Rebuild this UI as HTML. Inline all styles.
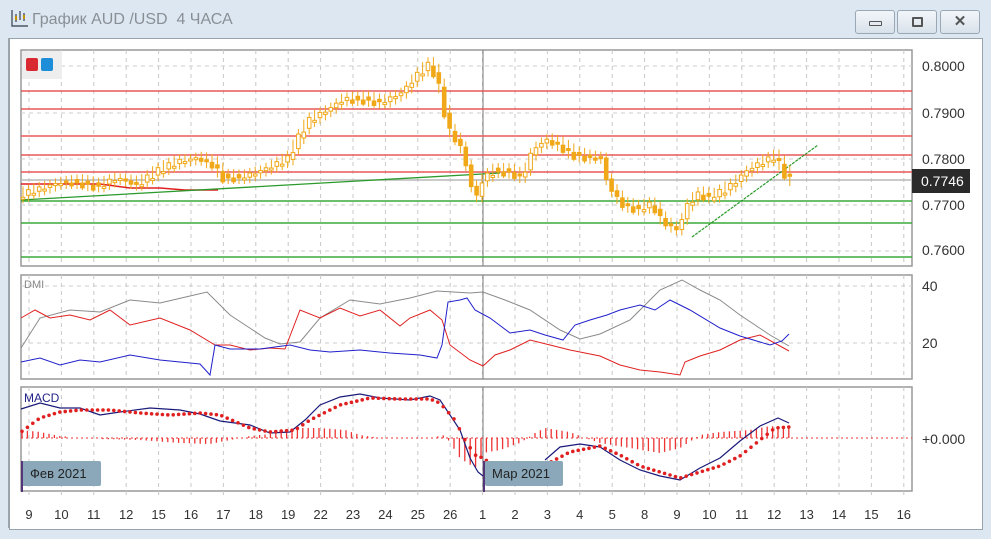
<!DOCTYPE html>
<html><head><meta charset="utf-8"><style>
body{margin:0;width:991px;height:539px;background:#dce7f1;overflow:hidden;font-family:"Liberation Sans",sans-serif;position:relative}
.title{position:absolute;left:32px;top:11px;font-size:16px;color:#8a8f96;z-index:3}
.btn{position:absolute;top:10px;height:22px;border:1px solid #9aa8b6;border-radius:3px;background:linear-gradient(#f2f6fa,#d8e1ea)}
.panel{position:absolute;left:8px;top:38px;width:910px;height:490px;background:#fff;border:1px solid #9aa4ad}
svg{position:absolute;left:0;top:0}
</style></head><body>
<div style="position:absolute;left:0;top:38px;width:8px;height:490px;background:#dce7f1;border-right:1px solid #9aa4ad"></div>
<div class="panel" style="left:9px;width:972px"></div>
<svg width="991" height="539" id="c">
<g fill="#fff" stroke="#999" stroke-width="1.5">
<rect x="21" y="50" width="891" height="216"/>
<rect x="21" y="275" width="891" height="104"/>
<rect x="21" y="387" width="891" height="104"/>
</g>
<g id="grid" stroke="#c8c8c8" stroke-dasharray="4,4" stroke-width="1"></g>
<g stroke="#ccc" stroke-dasharray="4,4">
<path d="M21 66H912M21 113H912M21 159H912M21 205H912M21 251H912M21 286H912M21 343H912"/>
</g>
<path d="M483 50V266M483 275V379M483 387V491" stroke="#777"/>
<rect x="22" y="51" width="40" height="28" fill="#eee"/>
<rect x="26" y="58" width="12" height="13" rx="2" fill="#d82a30"/><rect x="41" y="58" width="12" height="13" rx="2" fill="#1e8ed8"/>
<g stroke="#e85858" stroke-width="1.5"><path d="M21 91H912M21 109H912M21 136H912M21 155H912M21 172H912"/></g>
<path d="M21 180H912" stroke="#b8b8b8" stroke-width="1.5"/>
<g stroke="#3aaa3a" stroke-width="1.5"><path d="M21 201H912M21 223H912M21 257H912"/></g>
<path d="M21 184H100L130 188H160L185 190H218" stroke="#e02020" stroke-width="1.5" fill="none"/>
<path d="M21 200L500 173" stroke="#2a9a2a" stroke-width="1.3"/>
<path d="M692 237L818 145" stroke="#2a9a2a" stroke-width="1.2" stroke-dasharray="3,1"/>
<g id="candles"></g>
<path d="M21 348L40 318 70 310 100 312 130 300 160 303 190 296 207 292 230 315 265 338 280 344 300 342 320 318 350 300 380 304 410 298 437 291 470 293 483 292 505 300 530 310 560 330 580 339 600 334 630 320 660 290 682 280 700 290 720 300 740 315 770 335 789 346" stroke="#8a8a8a" fill="none"/>
<path d="M21 318L35 310 50 318 70 315 90 320 110 310 130 325 160 318 190 330 215 345 230 345 250 350 270 348 285 349 300 310 320 318 340 308 360 316 380 310 400 326 410 318 430 310 442 320 450 345 470 360 483 366 495 355 510 350 530 340 550 345 570 350 600 356 620 365 640 370 660 372 680 375 685 362 700 356 720 350 740 340 760 335 789 351" stroke="#e02020" fill="none"/>
<path d="M21 362L40 358 60 365 80 360 100 362 130 355 160 360 200 364 210 375 215 345 230 349 260 349 290 345 310 350 330 352 360 350 390 353 420 355 437 358 442 345 448 302 460 300 467 298 475 310 490 318 510 333 530 330 545 335 563 340 575 325 590 320 607 315 620 310 640 305 655 310 670 300 690 310 720 328 740 336 760 342 770 345 782 341 789 334" stroke="#2020cc" fill="none"/>
<path d="M21 438H912" stroke="#e33" stroke-dasharray="2,3"/>
<g id="hist" stroke="#e33" stroke-width="1.3"></g>
<path d="M21 409L40 403 60 408 80 408 100 415 120 412 150 408 180 410 200 414 220 421 250 425 270 433 290 432 305 420 320 405 340 397 360 394 380 398 410 400 430 396 440 400 460 430 470 458 478 472 483 476" stroke="#1a1a7a" fill="none" stroke-width="1.2"/>
<path d="M545 460L560 447 580 444 600 447 620 460 640 470 660 476 680 480 700 468 720 458 740 441 760 426 778 418 789 423" stroke="#1a1a7a" fill="none" stroke-width="1.2"/>
<g id="dots" fill="#e02020"></g>
<rect x="21" y="461" width="80" height="25" rx="2" fill="#8aa8ba"/><path d="M22 461V492" stroke="#55357a" stroke-width="2"/>
<rect x="485" y="461" width="78" height="25" rx="2" fill="#8aa8ba"/><path d="M484 461V492" stroke="#55357a" stroke-width="2"/>
<text x="30" y="478" font-size="13" fill="#222" font-family="Liberation Sans">Фев 2021</text>
<text x="492" y="478" font-size="13" fill="#222" font-family="Liberation Sans">Мар 2021</text>
<text x="24" y="288" font-size="11" fill="#888" font-family="Liberation Sans">DMI</text>
<text x="24" y="402" font-size="12" fill="#22228a" font-family="Liberation Sans">MACD</text>
<g font-size="14" fill="#333" font-family="Liberation Sans">
<text x="922" y="71">0.8000</text><text x="922" y="118">0.7900</text><text x="922" y="164">0.7800</text><text x="922" y="210">0.7700</text><text x="922" y="255">0.7600</text>
<text x="922" y="291">40</text><text x="922" y="348">20</text><text x="922" y="444">+0.000</text>
</g>
<rect x="912" y="169" width="58" height="24" fill="#2a2a2a"/>
<text x="921" y="186" font-size="14" fill="#fff" font-family="Liberation Sans">0.7746</text>
<g id="labels" font-size="13" fill="#333" font-family="Liberation Sans" text-anchor="middle"></g>
</svg>
<svg width="40" height="36" style="z-index:2">
<g stroke="#4a5866" stroke-width="1.4" fill="none"><path d="M12 10v16h16"/><path d="M16 14v8M20 11v9M24 13v8"/></g>
<rect x="15" y="16" width="2" height="4" fill="#c49000"/><rect x="23" y="15" width="2" height="4" fill="#c49000"/>
</svg>
<div class="title">График AUD /USD&nbsp; 4 ЧАСА</div>
<div class="btn" style="left:855px;width:38px"><div style="position:absolute;left:13px;top:10px;width:11px;height:3px;border:1px solid #555;border-radius:1px"></div></div>
<div class="btn" style="left:897px;width:38px"><div style="position:absolute;left:14px;top:6px;width:7px;height:6px;border:2px solid #555;border-radius:1px"></div></div>
<div class="btn" style="left:940px;width:38px;text-align:center;font-size:15px;line-height:22px;color:#555;font-weight:bold">✕</div>
<script>
var ns="http://www.w3.org/2000/svg";
function el(p,t,a,txt){var e=document.createElementNS(ns,t);for(var k in a)e.setAttribute(k,a[k]);if(txt)e.textContent=txt;document.getElementById(p).appendChild(e);}
var lab=["9","10","11","12","15","16","17","18","19","22","23","24","25","26","1","2","3","4","5","8","9","10","11","12","13","14","15","16"];
var g="";
for(var i=0;i<lab.length;i++){var x=29+i*32.4;g+="M"+x+" 50V266M"+x+" 275V379M"+x+" 387V491M"+x+" 491V497";el("labels","text",{x:x,y:519},lab[i]);}
el("grid","path",{d:g});
var P=[[21,197],[40,190],[60,183],[80,183],[100,187],[120,178],[140,185],[160,172],[180,162],[200,158],[215,165],[225,178],[245,178],[270,168],[290,160],[300,140],[310,122],[330,110],[345,100],[365,100],[385,103],[405,92],[420,75],[432,65],[440,80],[450,128],[465,150],[472,180],[478,200],[485,180],[495,172],[510,172],[525,178],[535,150],[548,140],[560,145],[575,155],[590,158],[605,158],[610,185],[625,205],[640,210],[655,205],[665,222],[680,230],[690,205],[700,195],[715,198],[735,185],[750,170],[765,162],[778,158],[785,170],[790,180]];
function yAt(x){for(var i=1;i<P.length;i++)if(x<=P[i][0]){var a=P[i-1],b=P[i];return a[1]+(b[1]-a[1])*(x-a[0])/(b[0]-a[0]);}return 180;}
for(var x=23;x<=790;x+=5.4){var y0=yAt(x-2.7),y1=yAt(x+2.7);var r=Math.sin(x*1.7)*4;var tp=Math.min(y0,y1)-2-Math.abs(r),bt2=Math.max(y0,y1)+2;
el("candles","line",{x1:x,x2:x,y1:tp-3,y2:bt2+4,stroke:"#f0a818","stroke-width":1});
var bt=Math.min(y0,y1+r),bh=Math.max(2,Math.abs(y1+r-y0));
el("candles","rect",{x:x-1.8,y:bt,width:3.6,height:bh,fill:(y1<y0?"#fff":"#f0a818"),stroke:"#f0a818","stroke-width":1});}
var M=[[21,432],[40,418],[60,412],[80,410],[110,410],[140,413],[170,415],[200,413],[220,415],[250,428],[270,432],[295,430],[310,420],[340,405],[370,398],[400,399],[430,399],[440,403],[455,420],[465,440],[475,455],[483,458],[500,470],[520,477],[545,465],[570,452],[600,446],[620,455],[640,466],[660,472],[680,478],[700,472],[720,466],[740,456],[760,440],[775,428],[789,427]];
function mAt(x){for(var i=1;i<M.length;i++)if(x<=M[i][0]){var a=M[i-1],b=M[i];return a[1]+(b[1]-a[1])*(x-a[0])/(b[0]-a[0]);}return 428;}
for(var x=22;x<=790;x+=5.4){el("dots","circle",{cx:x,cy:mAt(x),r:1.8});}
var H=[[21,-8],[40,-6],[60,-2],[80,0],[100,1],[140,2],[180,5],[210,6],[230,2],[250,-2],[270,-4],[295,-10],[320,-10],[345,-8],[360,-3],[380,0],[430,0],[445,-3],[460,20],[475,30],[483,15],[500,12],[520,5],[535,-5],[545,-10],[570,-6],[585,0],[600,5],[630,10],[660,15],[680,10],[700,-3],[720,-6],[750,-8],[770,-12],[789,-10]];
function hAt(x){for(var i=1;i<H.length;i++)if(x<=H[i][0]){var a=H[i-1],b=H[i];return a[1]+(b[1]-a[1])*(x-a[0])/(b[0]-a[0]);}return 0;}
var hd="";for(var x=22;x<=790;x+=5.4){var h=hAt(x);if(Math.abs(h)>1)hd+="M"+x.toFixed(1)+" 438V"+(438+h).toFixed(1);}
el("hist","path",{d:hd});
</script>
</body></html>
